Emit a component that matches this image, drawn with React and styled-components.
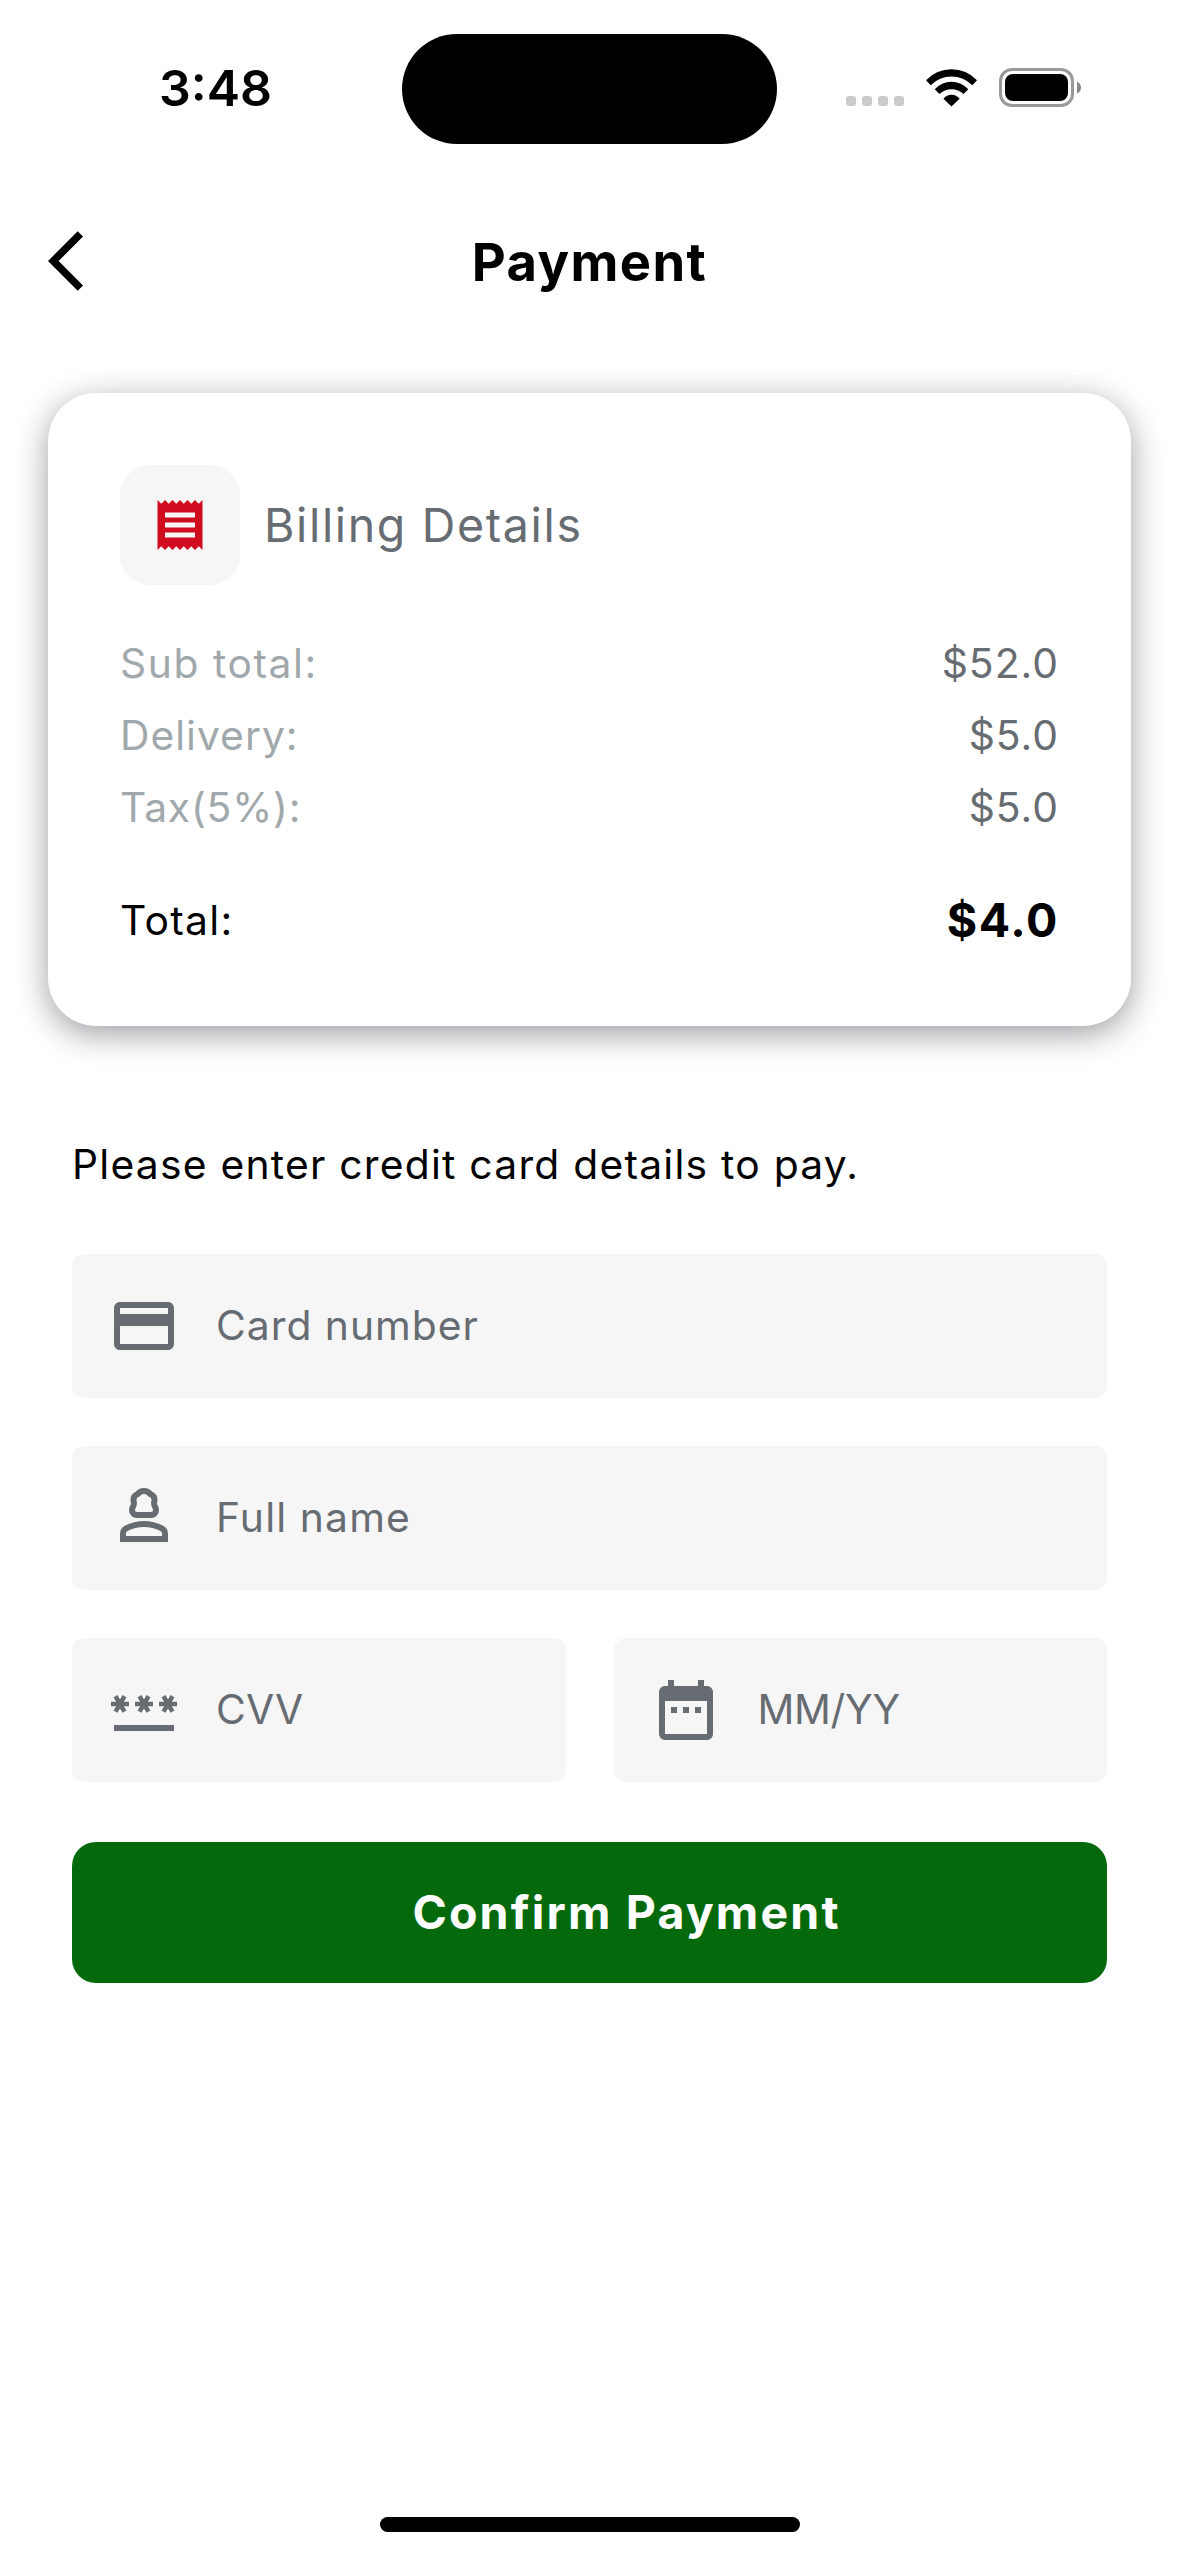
import React from "react";
import styled, { createGlobalStyle } from "styled-components";
import { MdReceipt, MdCreditCard, MdPassword, MdDateRange } from "react-icons/md";

const GlobalStyle = createGlobalStyle`
  *, *::before, *::after { box-sizing: border-box; }
  body {
    margin: 0;
    background: #fff;
    font-family: Inter, Roboto, "Liberation Sans", sans-serif;
  }
`;

const Screen = styled.div`
  width: 1179px;
  height: 2556px;
  display: flex;
  flex-direction: column;
  background: #fff;
  overflow: hidden;
`;

const Text = styled.span`
  font-size: ${(p) => p.$size || 40.8}px;
  font-weight: ${(p) => p.$weight || 400};
  letter-spacing: ${(p) => p.$spacing ?? 1}px;
  color: ${(p) => p.$color || "#000"};
  line-height: 60px;
  white-space: nowrap;
`;

const StatusBar = styled.div`
  height: 177px;
  padding: 34px 98px 0 0;
  display: grid;
  grid-template-columns: 402px 375px 1fr;
`;

const Clock = styled.div`
  height: 108px;
  padding: 24px 0 0 159px;
`;

const Island = styled.div`
  height: 110px;
  border-radius: 55px;
  background: #000;
`;

const StatusIcons = styled.div`
  height: 110px;
  display: flex;
  align-items: flex-start;
  justify-content: flex-end;
  padding-top: 34px;
`;

const SignalDots = styled.div`
  display: flex;
  gap: 6px;
  margin: 28px 22px 0 0;
`;

const Dot = styled.i`
  width: 10px;
  height: 10px;
  border-radius: 3px;
  background: #cbcbcb;
`;

const Wifi = styled.svg`
  width: 51px;
  height: 38px;
  margin: 1px 22px 0 0;
`;

const Battery = styled.svg`
  width: 82px;
  height: 39px;
`;

const Header = styled.header`
  height: 168px;
  padding-top: 2px;
  display: grid;
  grid-template-columns: 120px 1fr 120px;
  align-items: center;
  justify-items: center;
`;

const BackButton = styled.svg`
  width: 72px;
  height: 72px;
  margin: 0 0 2px 48px;
  justify-self: start;
`;

const BillingCard = styled.section`
  margin: 48px 48px 0;
  padding: 72px 72px 70px;
  border-radius: 48px;
  background: #fff;
  box-shadow: 0 8px 32px rgba(26, 31, 40, 0.43);
`;

const BillingHead = styled.div`
  display: flex;
  align-items: center;
  gap: 24px;
  margin-bottom: 42px;
`;

const IconTile = styled.div`
  width: 120px;
  height: 120px;
  border-radius: 30px;
  background: #f6f6f6;
  color: #d00d20;
  display: flex;
  align-items: center;
  justify-content: center;
`;

const AmountRow = styled.div`
  height: 72px;
  display: flex;
  align-items: center;
  justify-content: space-between;
  margin-top: ${(p) => (p.$total ? 41 : 0)}px;

  ${Text} {
    margin-bottom: ${(p) => (p.$total ? 1 : 0)}px;
  }
`;

const Form = styled.form`
  display: flex;
  flex-direction: column;
  padding: 108px 72px 0;
`;

const Fields = styled.div`
  display: grid;
  grid-template-columns: 1fr 1fr;
  gap: 48px;
  margin: 60px 0;
`;

const Field = styled.label`
  grid-column: ${(p) => (p.$wide ? "span 2" : "auto")};
  height: 144px;
  padding: 0 36px;
  border-radius: 12px;
  background: #f6f6f6;
  color: #676c72;
  display: flex;
  align-items: center;
  gap: 36px;

  ${Text} {
    margin-bottom: 2px;
  }
`;

const PersonSvg = styled.svg`
  width: 72px;
  height: 72px;
`;

const ConfirmButton = styled.div`
  height: 141px;
  border-radius: 24px;
  background: #03690b;
  display: flex;
  align-items: center;
  justify-content: center;
  padding: 0 0 2px 74px;
`;

const HomeIndicator = styled.div`
  width: 420px;
  height: 15px;
  border-radius: 8px;
  background: #000;
  margin: auto auto 24px 380px;
`;

const PersonIcon = () => (
  <PersonSvg viewBox="0 0 24 24" fill="none" stroke="currentColor" strokeWidth="2" strokeLinejoin="miter">
    <path
      strokeLinejoin="round"
      d="M9.6 11h4.8A1.6 1.6 0 0 0 16 9.4c0-1.1-.65-1.4-.65-2.2 0-.5.15-.7.15-1.3 0-.9-.5-1.5-1.3-1.8C13.8 3.6 13.1 3 12 3s-1.8.6-2.2 1.1c-.8.3-1.3.9-1.3 1.8 0 .6.15.8.15 1.3 0 .8-.65 1.1-.65 2.2A1.6 1.6 0 0 0 9.6 11z"
    />
    <path d="M5 19v-1.78c0-.75.4-1.43 1.06-1.77C7.56 14.68 9.63 14 12 14s4.44.68 5.94 1.45c.66.34 1.06 1.02 1.06 1.77V19H5z" />
  </PersonSvg>
);

const GREY = "#676c72";
const LIGHT = "#a1a8ac";

const amounts = [
  ["Sub total:", "$52.0", 1.55],
  ["Delivery:", "$5.0", 1],
  ["Tax(5%):", "$5.0", 0.8],
];

export default function App() {
  return (
    <Screen>
      <GlobalStyle />
      <StatusBar>
        <Clock>
          <Text $size={50} $weight={600} $spacing={0}>3:48</Text>
        </Clock>
        <Island />
        <StatusIcons>
          <SignalDots>
            <Dot /><Dot /><Dot /><Dot />
          </SignalDots>
          <Wifi viewBox="19 27 152 112">
            <path d="M19 60A104 104 0 0 1 171 60L157 75A87 87 0 0 0 33 75Z" />
            <path d="M45 87A66 66 0 0 1 145 87L131 101A53 53 0 0 0 59 101Z" />
            <path d="M71 115A30 30 0 0 1 119 115L95 138Z" />
          </Wifi>
          <Battery viewBox="0 0 82 39">
            <rect x="1.5" y="1.5" width="72" height="36" rx="11.5" fill="none" stroke="#999" strokeWidth="3" />
            <rect x="6" y="6" width="63" height="27" rx="8" />
            <path d="M78 13.5q4 2 4 6t-4 6z" fill="#888" />
          </Battery>
        </StatusIcons>
      </StatusBar>

      <Header>
        <BackButton viewBox="0 0 24 24">
          <path d="M11.67 3.87 9.9 2.1 0 12l9.9 9.9 1.77-1.77L3.54 12z" />
        </BackButton>
        <Text as="h1" $size={52.5} $weight={700} $spacing={1.4}>Payment</Text>
      </Header>

      <BillingCard>
        <BillingHead>
          <IconTile><MdReceipt size={60} /></IconTile>
          <Text $size={46.5} $color={GREY} $spacing={1.65}>Billing Details</Text>
        </BillingHead>
        {amounts.map(([label, value, spacing]) => (
          <AmountRow key={label}>
            <Text $color={LIGHT} $spacing={spacing}>{label}</Text>
            <Text $color={GREY}>{value}</Text>
          </AmountRow>
        ))}
        <AmountRow $total>
          <Text $spacing={1.3}>Total:</Text>
          <Text $size={46.5} $weight={700} $spacing={1.6}>$4.0</Text>
        </AmountRow>
      </BillingCard>

      <Form>
        <Text $spacing={1.23}>Please enter credit card details to pay.</Text>
        <Fields>
          <Field $wide>
            <MdCreditCard size={72} />
            <Text $color={GREY}>Card number</Text>
          </Field>
          <Field $wide>
            <PersonIcon />
            <Text $color={GREY} $spacing={1.15}>Full name</Text>
          </Field>
          <Field>
            <MdPassword size={72} />
            <Text $color={GREY} $spacing={0.2}>CVV</Text>
          </Field>
          <Field>
            <MdDateRange size={72} />
            <Text $color={GREY} $spacing={-0.3}>MM/YY</Text>
          </Field>
        </Fields>
        <ConfirmButton>
          <Text $size={46.5} $weight={700} $color="#fff" $spacing={2.15}>Confirm Payment</Text>
        </ConfirmButton>
      </Form>

      <HomeIndicator />
    </Screen>
  );
}
